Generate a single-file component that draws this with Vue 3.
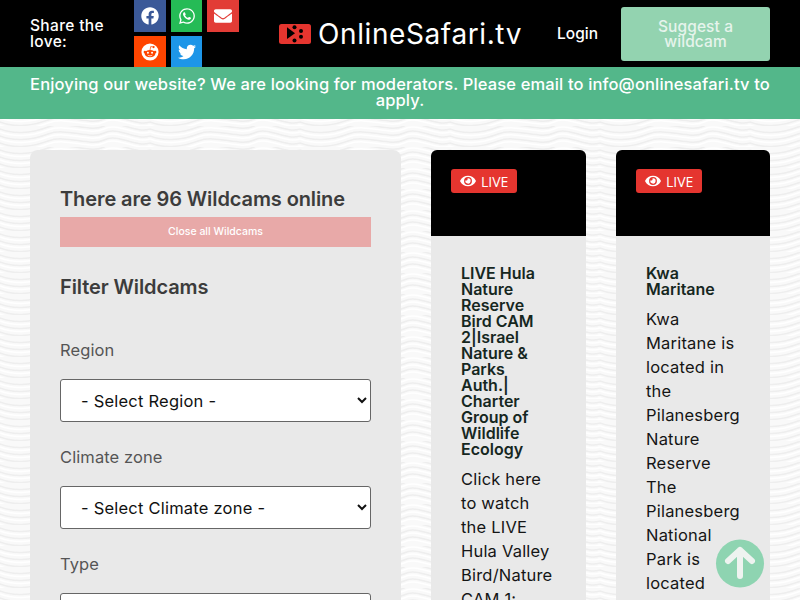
<script setup>
const socials = [
  { name: 'facebook', color: '#3b5998', box: '0 0 512 512', d: 'M504 256C504 119 393 8 256 8S8 119 8 256c0 123.78 90.69 226.38 209.25 245V327.69h-63V256h63v-54.64c0-62.15 37-96.48 93.67-96.48 27.14 0 55.52 4.84 55.52 4.84v61h-31.28c-30.8 0-40.41 19.12-40.41 38.73V256h68.78l-11 71.69h-57.78V501C413.31 482.38 504 379.78 504 256z' },
  { name: 'whatsapp', color: '#25bb56', box: '0 0 448 512', d: 'M380.9 97.1C339 55.1 283.2 32 223.9 32c-122.4 0-222 99.6-222 222 0 39.1 10.2 77.3 29.6 111L0 480l117.7-30.9c32.4 17.7 68.9 27 106.1 27h.1c122.3 0 224.1-99.6 224.1-222 0-59.3-25.2-115-67.1-157zm-157 341.6c-33.2 0-65.7-8.9-94-25.7l-6.7-4-69.8 18.3L72 359.2l-4.4-7c-18.5-29.4-28.2-63.3-28.2-98.2 0-101.7 82.8-184.5 184.6-184.5 49.3 0 95.6 19.2 130.4 54.1 34.8 34.9 56.2 81.2 56.1 130.5 0 101.8-84.9 184.6-186.6 184.6zm101.2-138.2c-5.5-2.8-32.8-16.2-37.9-18-5.1-1.9-8.8-2.8-12.5 2.8-3.7 5.6-14.3 18-17.6 21.8-3.2 3.7-6.5 4.2-12 1.4-32.6-16.3-54-29.1-75.5-66-5.7-9.8 5.7-9.1 16.3-30.3 1.8-3.7.9-6.9-.5-9.7-1.4-2.8-12.5-30.1-17.1-41.2-4.5-10.8-9.1-9.3-12.5-9.5-3.2-.2-6.9-.2-10.6-.2-3.7 0-9.7 1.4-14.8 6.9-5.1 5.6-19.4 19-19.4 46.3 0 27.3 19.9 53.7 22.6 57.4 2.8 3.7 39.1 59.7 94.8 83.8 35.2 15.2 49 16.5 66.6 13.9 10.7-1.6 32.8-13.4 37.4-26.4 4.6-13 4.6-24.1 3.2-26.4-1.3-2.5-5-3.9-10.5-6.6z' },
  { name: 'mail', color: '#e23c36', box: '0 0 512 512', d: 'M502.3 190.8c3.9-3.1 9.7-.2 9.7 4.7V400c0 26.5-21.5 48-48 48H48c-26.5 0-48-21.5-48-48V195.6c0-5 5.7-7.8 9.7-4.7 22.4 17.4 52.1 39.5 154.1 113.6 21.1 15.4 56.7 47.8 92.2 47.6 35.7.3 72-32.8 92.3-47.6 102-74.1 131.6-96.3 154-113.7zM256 320c23.2.4 56.6-29.2 73.4-41.4 132.7-96.3 142.8-104.7 173.4-128.7 5.8-4.5 9.2-11.5 9.2-18.9v-19c0-26.5-21.5-48-48-48H48C21.5 64 0 85.5 0 112v19c0 7.4 3.4 14.3 9.2 18.9 30.6 23.9 40.7 32.4 173.4 128.7 16.8 12.2 50.2 41.8 73.4 41.4z' },
  { name: 'reddit', color: '#ff4500', box: '', d: '' },
  { name: 'twitter', color: '#1d96e8', box: '0 0 512 512', d: 'M459.37 151.716c.325 4.548.325 9.097.325 13.645 0 138.72-105.583 298.558-298.558 298.558-59.452 0-114.68-17.219-161.137-47.106 8.447.974 16.568 1.299 25.34 1.299 49.055 0 94.213-16.568 130.274-44.832-46.132-.975-84.792-31.188-98.112-72.772 6.498.974 12.995 1.624 19.818 1.624 9.421 0 18.843-1.3 27.614-3.573-48.081-9.747-84.143-51.98-84.143-102.985v-1.299c13.969 7.797 30.214 12.67 47.431 13.319-28.264-18.843-46.781-51.005-46.781-87.391 0-19.492 5.197-37.36 14.294-52.954 51.655 63.675 129.3 105.258 216.365 109.807-1.624-7.797-2.599-15.918-2.599-24.04 0-57.828 46.782-104.934 104.934-104.934 30.213 0 57.502 12.67 76.67 33.137 23.715-4.548 46.456-13.32 66.599-25.34-7.798 24.366-24.366 44.833-46.132 57.827 21.117-2.273 41.584-8.122 60.426-16.243-14.292 20.791-32.161 39.308-52.628 54.253z' }
]
const eye = 'M572.52 241.4C518.29 135.59 410.93 64 288 64S57.68 135.64 3.48 241.41a32.35 32.35 0 0 0 0 29.19C57.71 376.41 165.07 448 288 448s230.32-71.64 284.52-177.41a32.35 32.35 0 0 0 0-29.19zM288 400a144 144 0 1 1 144-144 143.93 143.93 0 0 1-144 144zm0-240a95.31 95.31 0 0 0-25.31 3.79 47.85 47.85 0 0 1-66.9 66.9A95.78 95.78 0 1 0 288 160z'
const filters = [
  { label: 'Region', option: '- Select Region -' },
  { label: 'Climate zone', option: '- Select Climate zone -' },
  { label: 'Type', option: '- Select Type -' }
]
const cards = [
  { title: ['LIVE Hula', 'Nature', 'Reserve', 'Bird CAM', '2|Israel', 'Nature &', 'Parks', 'Auth.|', 'Charter', 'Group of', 'Wildlife', 'Ecology'],
    text: ['Click here', 'to watch', 'the LIVE', 'Hula Valley', 'Bird/Nature', 'CAM 1:'] },
  { title: ['Kwa', 'Maritane'],
    text: ['Kwa', 'Maritane is', 'located in', 'the', 'Pilanesberg', 'Nature', 'Reserve', 'The', 'Pilanesberg', 'National', 'Park is', 'located', 'in the'] }
]
</script>

<template>
  <div class="page">
    <header class="topbar">
      <div class="share">Share the love:</div>
      <div class="socials">
        <a v-for="s in socials" :key="s.name" class="social" :style="{ background: s.color }">
          <svg v-if="s.d" class="social-icon" :viewBox="s.box"><path :d="s.d" fill="#fff" /></svg>
          <svg v-else class="social-icon" viewBox="0 0 20 20">
            <circle cx="10" cy="10" r="9.500" fill="#fff" />
            <ellipse cx="10" cy="11.800" rx="6" ry="4" fill="#ff4500" />
            <circle cx="4.300" cy="10" r="1.400" fill="#ff4500" />
            <circle cx="15.700" cy="10" r="1.400" fill="#ff4500" />
            <circle cx="14" cy="4.500" r="1.200" fill="#ff4500" />
            <path d="M10 8 10.800 3.900 14 4.500" stroke="#ff4500" stroke-width=".8" fill="none" />
            <circle cx="7.700" cy="10.900" r="1.100" fill="#fff" />
            <circle cx="12.300" cy="10.900" r="1.100" fill="#fff" />
            <path d="M7.500 13.500c1.500 1 3.500 1 5 0" stroke="#fff" stroke-width=".8" fill="none" />
          </svg>
        </a>
      </div>
      <div class="logo">
        <svg class="logo-mark" viewBox="0 0 32 20">
          <rect width="32" height="20" rx="2.500" fill="#e5352f" />
          <path d="M8 3.200 16 9.200 8 15z" fill="#000" />
          <circle cx="15.500" cy="3.300" r="2" fill="#000" />
          <circle cx="22" cy="7" r="2" fill="#000" />
          <circle cx="22" cy="12.800" r="2" fill="#000" />
          <circle cx="15.500" cy="16.500" r="2" fill="#000" />
        </svg>
        <span class="logo-text">OnlineSafari.tv</span>
      </div>
      <a class="login">Login</a>
      <a class="suggest">Suggest a<br />wildcam</a>
    </header>

    <div class="notice">
      Enjoying our website? We are looking for moderators. Please email to info@onlinesafari.tv to<br />apply.
    </div>

    <main class="content">
      <aside class="panel">
        <h2 class="count">There are 96 Wildcams online</h2>
        <button class="close-all" type="button">Close all Wildcams</button>
        <h2 class="filter-title">Filter Wildcams</h2>
        <div v-for="f in filters" :key="f.label" class="field">
          <label class="field-label">{{ f.label }}</label>
          <select class="select">
            <option>{{ f.option }}</option>
          </select>
        </div>
      </aside>

      <article v-for="c in cards" :key="c.title[0]" class="card">
        <div class="card-media">
          <span class="live">
            <svg class="eye" viewBox="0 0 576 512"><path :d="eye" fill="#fff" /></svg>
            LIVE
          </span>
        </div>
        <div class="card-body">
          <h3 class="card-title"><template v-for="l in c.title" :key="l">{{ l }}<br /></template></h3>
          <p class="card-text"><template v-for="l in c.text" :key="l">{{ l }}<br /></template></p>
        </div>
      </article>
    </main>

    <a class="to-top">
      <svg viewBox="0 0 50 50" width="50" height="50">
        <circle cx="25" cy="24.500" r="24" fill="#8ed4b1" />
        <path d="M25 37V11M13 22 25 11l12 11" fill="none" stroke="#eef3f0" stroke-width="6" stroke-linecap="round" stroke-linejoin="round" />
      </svg>
    </a>
  </div>
</template>

<style>
html, body { margin: 0; height: 600px; overflow: hidden; }
</style>

<style scoped>
.page {
  position: relative;
  width: 800px;
  height: 600px;
  overflow: hidden;
  font-family: Inter, "Open Sans", sans-serif;
  background-color: #f9f9f9;
  background-image: url("data:image/svg+xml,%3Csvg xmlns='http://www.w3.org/2000/svg' width='150' height='21'%3E%3Cg fill='none' stroke-linejoin='round'%3E%3Cg stroke='%23eeeeee' stroke-width='1.500'%3E%3Cpath d='M0 3C12 8 30 8 48 1S90 7 104 0 136 8 150 3'/%3E%3Cpath d='M0 10C12 15 30 15 48 8S90 14 104 7 136 15 150 10'/%3E%3Cpath d='M0 17C12 22 30 22 48 15S90 21 104 14 136 22 150 17'/%3E%3C/g%3E%3Cg stroke='%23ffffff' stroke-width='1.500'%3E%3Cpath d='M0 6C12 11 30 11 48 4S90 10 104 3 136 11 150 6'/%3E%3Cpath d='M0 13C12 18 30 18 48 11S90 17 104 10 136 18 150 13'/%3E%3Cpath d='M0 20C12 25 30 25 48 18S90 24 104 17 136 25 150 20'/%3E%3C/g%3E%3C/g%3E%3C/svg%3E");
}
.topbar {
  height: 67px;
  background: #000;
  display: flex;
  align-items: center;
  padding: 0 30px;
  box-sizing: border-box;
  color: #fff;
}
.share {
  width: 104px;
  flex: none;
  font-size: 15.500px;
  line-height: 16px;
  font-weight: 500;
  letter-spacing: .35px;
  padding-right: 14px;
  padding-top: 1px;
  box-sizing: border-box;
}
.socials {
  width: 105px;
  flex: none;
  align-self: flex-start;
  display: grid;
  grid-template-columns: 32px 31px 32px;
  grid-template-rows: 33px 31px;
  column-gap: 5px;
  row-gap: 4px;
  margin-top: -1px;
}
.social {
  display: flex;
  align-items: center;
  justify-content: center;
}
.social-icon { height: 18px; width: 18px; }
.logo {
  margin-left: 40px;
  width: 242px;
  flex: none;
  display: flex;
  align-items: center;
  gap: 7px;
}
.logo-mark { width: 32px; height: 20px; flex: none; }
.logo-text {
  font-size: 28px;
  line-height: 34px;
  letter-spacing: .6px;
  white-space: nowrap;
}
.login {
  margin-left: 36px;
  width: 64px;
  flex: none;
  font-size: 15.500px;
  font-weight: 500;
}
.suggest {
  width: 149px;
  height: 54px;
  flex: none;
  box-sizing: border-box;
  background: #93d3b0;
  border-radius: 3px;
  display: flex;
  align-items: center;
  justify-content: center;
  text-align: center;
  font-size: 15.500px;
  line-height: 15px;
  letter-spacing: .1px;
  font-weight: 500;
  color: #e6f4ec;
}
.notice {
  height: 52px;
  box-sizing: border-box;
  background: #53b78a;
  color: #fff;
  padding: 9px 30px 0;
  text-align: center;
  font-size: 16.500px;
  line-height: 16px;
  letter-spacing: .14px;
  font-weight: 500;
  white-space: nowrap;
}
.content {
  display: grid;
  grid-template-columns: 371fr 155fr 154fr;
  gap: 30px;
  padding: 31px 30px;
  align-items: start;
}
.panel {
  background: #e9e9e9;
  border-radius: 8px;
  padding: 36px 30px 30px;
  color: #333;
}
.count, .filter-title {
  margin: 0;
  font-size: 20px;
  line-height: 26px;
  font-weight: 600;
  letter-spacing: -.1px;
  color: #3c3c3c;
}
.close-all {
  display: block;
  width: 100%;
  height: 30px;
  margin-top: 5px;
  padding: 0 0 1px;
  border: 0;
  background: #e8a9a8;
  color: #fff;
  font: 500 10.500px Inter, sans-serif;
}
.filter-title { margin-top: 27px; }
.field { margin-top: 22px; }
.filter-title + .field { margin-top: 37px; }
.field-label {
  display: block;
  font-size: 16.500px;
  line-height: 26px;
  letter-spacing: .1px;
  color: #555;
}
.select {
  display: block;
  width: 100%;
  height: 43px;
  margin-top: 16px;
  padding: 0 16px;
  box-sizing: border-box;
  border: 1px solid #666;
  border-radius: 3px;
  background: #fff;
  color: #111;
  font: 400 16.500px Inter, sans-serif;
  letter-spacing: .22px;
}
.card {
  border-radius: 6px 6px 0 0;
  overflow: hidden;
  background: #e9e9e9;
  min-width: 0;
}
.card-media {
  height: 86px;
  background: #000;
  padding: 19px 20px;
  box-sizing: border-box;
}
.live {
  display: inline-flex;
  align-items: center;
  gap: 5px;
  height: 24px;
  padding: 0 9px;
  border-radius: 3px;
  background: #e5352f;
  color: #fff;
  font: 400 14px "Open Sans", sans-serif;
}
.eye { width: 16px; height: 14px; }
.card-body { padding: 29px 30px 30px; }
.card-title {
  margin: 0;
  font-size: 16px;
  line-height: 16px;
  font-weight: 600;
  color: #16271f;
  white-space: nowrap;
}
.card-text {
  margin: 10px 0 0;
  font-size: 16.500px;
  line-height: 24px;
  letter-spacing: .2px;
  color: #151515;
  white-space: nowrap;
}
.to-top {
  position: absolute;
  left: 715px;
  top: 539px;
  width: 50px;
  height: 50px;
}
</style>
